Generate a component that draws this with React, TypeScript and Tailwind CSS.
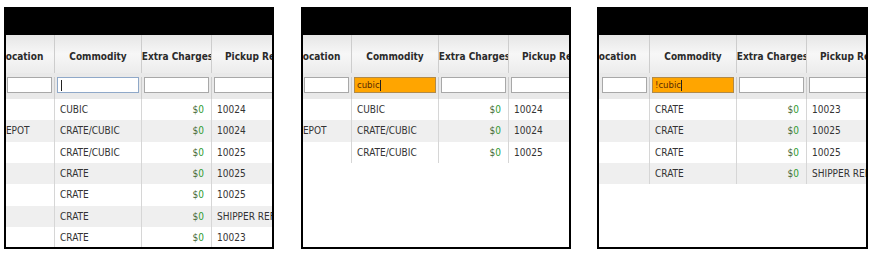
import React from "react";

type Row = { loc: string; com: string; ref: string };

const p1: Row[] = [
  { loc: "", com: "CUBIC", ref: "10024" },
  { loc: "DEPOT", com: "CRATE/CUBIC", ref: "10024" },
  { loc: "", com: "CRATE/CUBIC", ref: "10025" },
  { loc: "", com: "CRATE", ref: "10025" },
  { loc: "", com: "CRATE", ref: "10025" },
  { loc: "", com: "CRATE", ref: "SHIPPER REF" },
  { loc: "", com: "CRATE", ref: "10023" },
];
const p2: Row[] = p1.slice(0, 3);
const p3: Row[] = [
  { loc: "", com: "CRATE", ref: "10023" },
  { loc: "", com: "CRATE", ref: "10025" },
  { loc: "", com: "CRATE", ref: "10025" },
  { loc: "", com: "CRATE", ref: "SHIPPER REF" },
];

const font = "font-['DejaVu_Sans_Condensed','DejaVu_Sans',sans-serif] [font-stretch:condensed]";

function Panel({
  rows,
  filter,
  mode,
  shiftClass,
  widthClass,
  locHeadPad,
  locPad,
}: {
  rows: Row[];
  filter: string;
  mode: "focus" | "orange";
  shiftClass: string;
  widthClass: string;
  locHeadPad: string;
  locPad: string;
}) {
  return (
    <div className={`flex flex-col border-2 border-t-0 border-black bg-white h-[242px] overflow-hidden ${widthClass} ${font}`}>
      <div className="h-[28px] bg-black shrink-0" />
      <div className="overflow-hidden">
        <div className={`${shiftClass} w-[330px]`}>
          {/* header */}
          <div className="grid grid-cols-[64px_87px_70px_109px] h-[38px] bg-gradient-to-b from-[#e6e6e6] via-[#f7f7f7] to-[#ececec] text-[10px] font-bold text-[#2b2b2b]">
            <div className={`flex items-center ${locHeadPad} border-r border-[#cdcdcd] pt-[4px] whitespace-nowrap`}>Location</div>
            <div className="flex items-center justify-center border-r border-[#cdcdcd] pt-[4px]">Commodity</div>
            <div className="flex items-center justify-center border-r border-[#cdcdcd] pt-[4px] pl-[2px] whitespace-nowrap overflow-hidden">Extra Charges</div>
            <div className="flex items-center pl-[13px] pt-[4px] whitespace-nowrap">Pickup Ref #</div>
          </div>
          {/* filter row */}
          <div className="grid grid-cols-[64px_87px_70px_109px] h-[26px] bg-[#e9e9e9] pt-[4px]">
            <div className="pl-[16px] pr-[2px] border-r border-[#cdcdcd]">
              <div className="h-[16px] bg-white border border-[#a8a8a8]" />
            </div>
            <div className="px-[2px] border-r border-[#cdcdcd]">
              {mode === "focus" ? (
                <div className="h-[16px] bg-white border border-[#8fa8c8] flex items-center pl-[3px]">
                  <div className="w-px h-[11px] bg-[#222]" />
                </div>
              ) : (
                <div className="h-[16px] bg-[#ffa500] border border-[#b08a4a] flex items-center pl-[2px] text-[9.5px] text-[#5a2a00] leading-none">
                  {filter}
                  <div className="w-px h-[11px] bg-[#222]" />
                </div>
              )}
            </div>
            <div className="px-[2px] border-r border-[#cdcdcd]">
              <div className="h-[16px] bg-white border border-[#a8a8a8]" />
            </div>
            <div className="pl-[2px]">
              <div className="h-[16px] bg-white border border-[#a8a8a8]" />
            </div>
          </div>
          {/* rows */}
          {rows.map((r, i) => (
            <div
              key={i}
              className={`grid grid-cols-[64px_87px_70px_109px] h-[21.33px] text-[10px] text-[#333] items-stretch ${
                i % 2 === 1 ? "bg-[#efefef]" : "bg-white"
              }`}
            >
              <div className={`flex items-center ${locPad} border-r border-[#d6d6d6] whitespace-nowrap overflow-hidden`}>{r.loc}</div>
              <div className="flex items-center pl-[5px] border-r border-[#d6d6d6] whitespace-nowrap">{r.com}</div>
              <div className="flex items-center justify-end pr-[7px] border-r border-[#d6d6d6]">
                <span className="text-[#4a6a3a]">$</span>
                <span className="text-[#2f9a2f]">0</span>
              </div>
              <div className="flex items-center pl-[5px] whitespace-nowrap">{r.ref}</div>
            </div>
          ))}
        </div>
      </div>
    </div>
  );
}

export default function App() {
  return (
    <div className="w-[875px] h-[256px] bg-white flex pt-[7px] pl-[4px]">
      <Panel rows={p1} filter="" mode="focus" shiftClass="-ml-[15px]" widthClass="w-[270px]" locHeadPad="pl-[9px]" locPad="pl-[8px]" />
      <div className="w-[27px] shrink-0" />
      <Panel rows={p2} filter="cubic" mode="orange" shiftClass="-ml-[15px]" widthClass="w-[270px]" locHeadPad="pl-[9px]" locPad="pl-[8px]" />
      <div className="w-[26px] shrink-0" />
      <Panel rows={p3} filter="!cubic" mode="orange" shiftClass="-ml-[13px]" widthClass="w-[271px]" locHeadPad="pl-[7px]" locPad="pl-[6px]" />
    </div>
  );
}
